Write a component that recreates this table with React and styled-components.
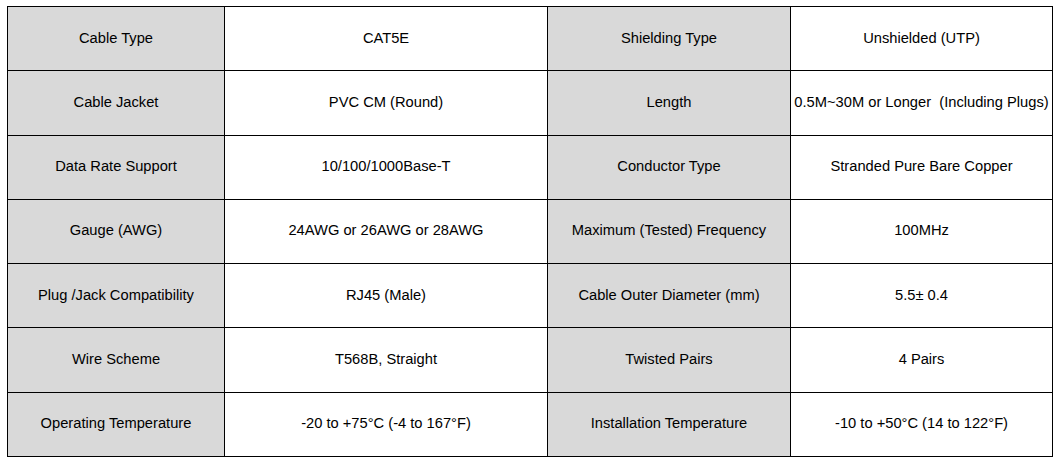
import React from "react";
import styled, { createGlobalStyle } from "styled-components";

const Global = createGlobalStyle`
  html, body { margin: 0; padding: 0; background: #fff; }
  body { font-family: "Liberation Sans", Arial, sans-serif; }
`;

const Page = styled.div`
  padding: 6px 0 0 7px;
`;

const Grid = styled.div`
  display: grid;
  grid-template-columns: 216px 322px 242px 261px;
  grid-template-rows: repeat(7, 1fr);
  height: 449px;
  width: 1044px;
  gap: 1px;
  background: #000;
  border: 1px solid #000;
`;

const Cell = styled.div`
  display: flex;
  align-items: center;
  justify-content: center;
  background: ${(p) => (p.$label ? "#d9d9d9" : "#ffffff")};
  color: #000;
  font-size: 14.7px;
  white-space: pre;
  text-align: center;
  padding-bottom: 2px;
`;

const rows = [
  ["Cable Type", "CAT5E", "Shielding Type", "Unshielded (UTP)"],
  ["Cable Jacket", "PVC CM (Round)", "Length", "0.5M~30M or Longer  (Including Plugs)"],
  ["Data Rate Support", "10/100/1000Base-T", "Conductor Type", "Stranded Pure Bare Copper"],
  ["Gauge (AWG)", "24AWG or 26AWG or 28AWG", "Maximum (Tested) Frequency", "100MHz"],
  ["Plug /Jack Compatibility", "RJ45 (Male)", "Cable Outer Diameter (mm)", "5.5\u00b1 0.4"],
  ["Wire Scheme", "T568B, Straight", "Twisted Pairs", "4 Pairs"],
  ["Operating Temperature", "-20 to +75\u00b0C (-4 to 167\u00b0F)", "Installation Temperature", "-10 to +50\u00b0C (14 to 122\u00b0F)"],
];

export default function App() {
  return (
    <>
      <Global />
      <Page>
        <Grid>
          {rows.map((r, i) =>
            r.map((t, j) => (
              <Cell key={`${i}-${j}`} $label={j % 2 === 0}>
                {t}
              </Cell>
            ))
          )}
        </Grid>
      </Page>
    </>
  );
}
